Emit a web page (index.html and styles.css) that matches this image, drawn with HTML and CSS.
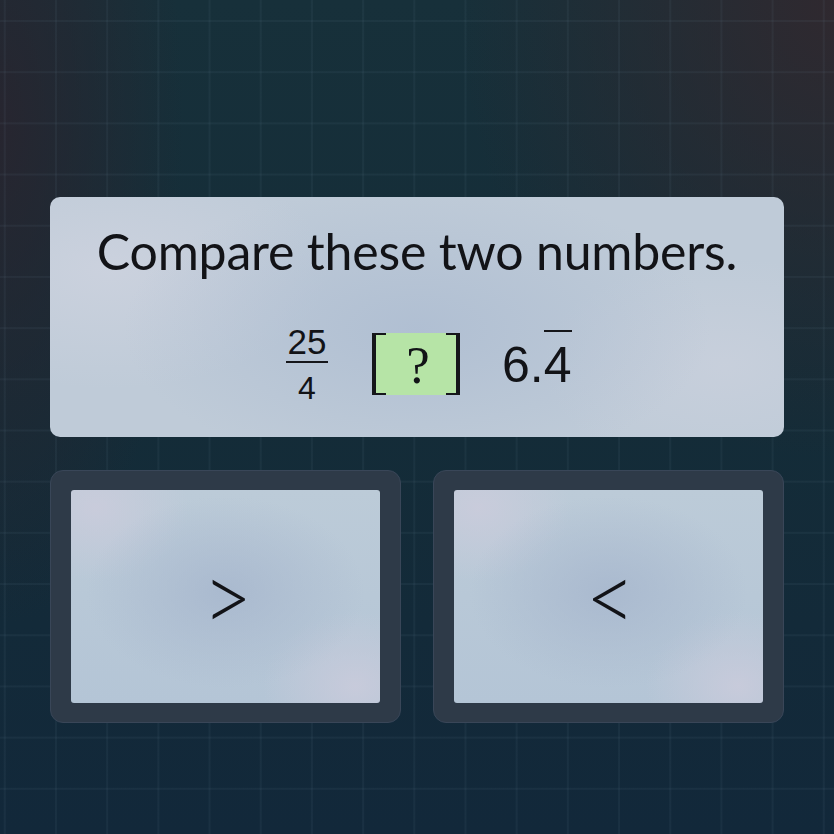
FILE: index.html
```html
<!DOCTYPE html>
<html lang="en">
<head>
<meta charset="utf-8">
<title>Compare these two numbers</title>
<link rel="stylesheet" href="styles.css">
</head>
<body>
<main class="page">
  <section class="question">
    <h1 class="title">Compare these two numbers.</h1>
    <div class="math">
      <div class="frac">
        <span class="num">25</span>
        <span class="bar"></span>
        <span class="den">4</span>
      </div>
      <div class="blank">
        <span class="brk brk-l"></span>
        <span class="qmark">?</span>
        <span class="brk brk-r"></span>
      </div>
      <div class="dec"><span class="int">6.</span><span class="rep">4</span></div>
    </div>
  </section>
  <section class="answers">
    <div class="slot"><button class="choice" type="button"><span class="sym">&gt;</span></button></div>
    <div class="slot"><button class="choice" type="button"><span class="sym">&lt;</span></button></div>
  </section>
</main>
</body>
</html>
```

FILE: styles.css
```css
html, body {
  margin: 0;
  padding: 0;
}

body {
  width: 834px;
  height: 834px;
  overflow: hidden;
  font-family: "Lato", "Liberation Sans", sans-serif;
  color: #121317;
  background-color: #142b36;
  background-image:
    linear-gradient(to right, rgba(120, 150, 170, 0.075) 1.5px, transparent 1.5px),
    linear-gradient(to bottom, rgba(120, 150, 170, 0.075) 1.5px, transparent 1.5px),
    radial-gradient(ellipse 45% 55% at 100% 0%, rgba(50, 40, 46, 0.9), rgba(50, 40, 46, 0) 100%),
    radial-gradient(ellipse 22% 60% at 0% 15%, rgba(42, 36, 46, 0.85), rgba(42, 36, 46, 0) 100%),
    linear-gradient(to bottom, #17303a 0%, #142c38 50%, #12283a 100%);
  background-size: 51.2px 51.2px, 51.2px 51.2px, 100% 100%, 100% 100%, 100% 100%;
  background-repeat: repeat, repeat, no-repeat, no-repeat, no-repeat;
  background-position: 3.8px 0, 0 20px, 0 0, 0 0, 0 0;
}

.page {
  padding: 197px 50px 0 50px;
  display: flex;
  flex-direction: column;
  gap: 33px;
}

.question {
  height: 240px;
  border-radius: 10px;
  background-color: #bfcbd8;
  background-image:
    radial-gradient(ellipse 40% 60% at 50% 55%, rgba(170, 186, 208, 0.7), rgba(170, 186, 208, 0) 100%),
    radial-gradient(ellipse 30% 50% at 8% 30%, rgba(208, 212, 224, 0.7), rgba(208, 212, 224, 0) 100%),
    radial-gradient(ellipse 25% 45% at 92% 70%, rgba(205, 210, 222, 0.6), rgba(205, 210, 222, 0) 100%);
  display: flex;
  flex-direction: column;
  align-items: center;
}

.title {
  margin: 24px 0 0 0;
  font-family: "Lato", "Liberation Sans", sans-serif;
  font-weight: 400;
  font-size: 50px;
  line-height: 60px;
  letter-spacing: -0.2px;
}

.math {
  align-self: stretch;
  margin-top: 43px;
  padding-left: 236px;
  display: flex;
  align-items: center;
}

.frac {
  display: flex;
  flex-direction: column;
  align-items: center;
  font-family: "Liberation Sans", Arial, sans-serif;
}

.num {
  font-size: 35px;
  line-height: 1;
}

.bar {
  width: 42px;
  height: 2px;
  margin-top: 2px;
  background: #15161a;
}

.den {
  margin-top: 9px;
  font-size: 32px;
  line-height: 1;
}

.blank {
  width: 82px;
  height: 62px;
  margin-left: 47px;
  background: #b6e4a6;
  display: flex;
  align-items: center;
  justify-content: space-between;
}

.brk {
  width: 10px;
  height: 58px;
  border-top: 2px solid #15161a;
  border-bottom: 2px solid #15161a;
}

.brk-l {
  border-left: 4px solid #15161a;
  margin-left: -3px;
}

.brk-r {
  border-right: 4px solid #15161a;
  margin-right: -3px;
}

.qmark {
  font-family: "Liberation Serif", "Times New Roman", serif;
  font-size: 53px;
  line-height: 1;
  margin-left: 4px;
  margin-top: 2px;
}

.dec {
  font-family: "Liberation Sans", Arial, sans-serif;
  font-size: 50px;
  line-height: 1;
  display: flex;
  align-items: flex-end;
  margin-left: 45px;
  margin-bottom: 8px;
}

.rep {
  display: inline-block;
  border-top: 2px solid #15161a;
  padding-top: 8px;
}

.answers {
  display: flex;
  gap: 32px;
}

.slot {
  flex: 1;
  height: 253px;
  box-sizing: border-box;
  padding: 20px 21px 20px 21px;
  border-radius: 13px;
  background: #2e3a48;
  border: 1px solid #394658;
  display: flex;
}

.choice {
  flex: 1;
  border: none;
  margin: -1px;
  border-radius: 3px;
  padding: 0;
  display: flex;
  align-items: center;
  justify-content: center;
  color: #121317;
  background-color: #b9c7d6;
  background-image:
    radial-gradient(ellipse 45% 45% at 50% 48%, rgba(168, 184, 206, 0.9), rgba(168, 184, 206, 0) 100%),
    radial-gradient(ellipse 30% 35% at 8% 8%, rgba(204, 204, 220, 0.8), rgba(204, 204, 220, 0) 100%),
    radial-gradient(ellipse 30% 35% at 92% 92%, rgba(204, 204, 220, 0.8), rgba(204, 204, 220, 0) 100%),
    linear-gradient(to bottom, #bccbd8, #b4c5d6);
  cursor: pointer;
}

.sym {
  display: inline-block;
  font-family: "Lato", "Liberation Sans", sans-serif;
  font-weight: 300;
  font-size: 86px;
  line-height: 1;
  transform: scaleY(1.12);
  margin-left: 4px;
  margin-top: -4px;
}
```
